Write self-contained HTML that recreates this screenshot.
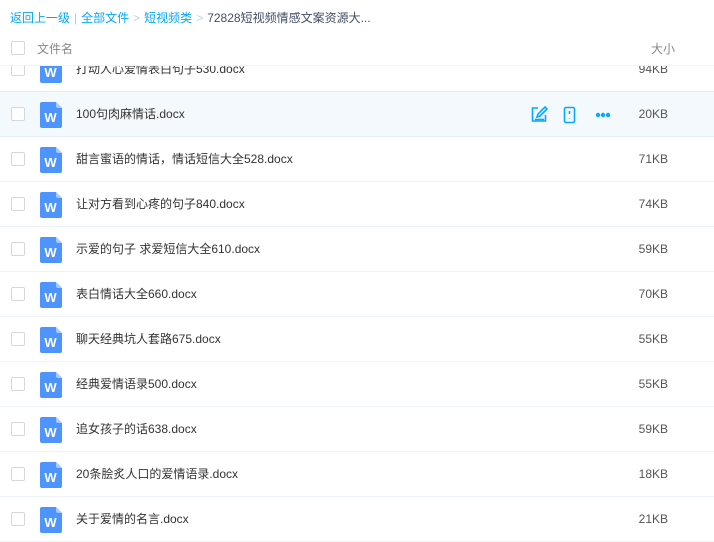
<!DOCTYPE html>
<html><head><meta charset="utf-8"><style>
*{margin:0;padding:0;box-sizing:border-box}
body{width:714px;height:537px;overflow:hidden;background:#fff;font-family:"Liberation Sans","Noto Sans CJK SC",sans-serif;font-size:12px;color:#424e67;position:relative}
.bc{position:absolute;left:10px;top:9px;font-size:12px;color:#06a7ff;white-space:nowrap}
.bc .g{color:#c5d0dc;margin:0 4px}
.bc .d{color:#424e67}
.hd{position:absolute;left:0;top:30px;width:714px;height:36px;background:#fff;border-bottom:1px solid #eef3f9;z-index:2}
.hd .t{position:absolute;left:37px;top:10px;color:#888}
.hd .s{position:absolute;left:651px;top:10px;color:#888}
.cb{position:absolute;left:11px;width:14px;height:14px;border:1px solid #d4d7de;border-radius:2px;background:#fff}
.row{position:absolute;left:0;width:714px;height:45px;border-bottom:1px solid #eef3f9}
.row.h{background:#f4f9fe;border-top:1px solid #e3eef9;border-bottom:1px solid #e3eef9}
.row .cb{top:15px}
.ic{position:absolute;left:40px;top:10px;width:22px;height:26px}
.nm{position:absolute;left:76px;top:0;line-height:44px;color:#333;white-space:nowrap}
.sz{position:absolute;right:46px;top:0;line-height:44px;color:#555}
.ops{position:absolute;left:530px;top:13px}
</style></head><body>
<div class="bc">返回上一级<span class="g" style="color:#b6c4d4">|</span>全部文件<span class="g">&gt;</span>短视频类<span class="g">&gt;</span><span class="d">72828短视频情感文案资源大...</span></div>
<div class="hd"><div class="cb" style="top:11px"></div><span class="t">文件名</span><span class="s">大小</span></div>
<svg width="0" height="0" style="position:absolute"><defs><symbol id="w" viewBox="0 0 22 26"><path d="M2 0H16L22 6V24a2 2 0 0 1-2 2H2a2 2 0 0 1-2-2V2a2 2 0 0 1 2-2z" fill="#4d94ff"/><path d="M16 0L22 6H18a2 2 0 0 1-2-2z" fill="#a8c9ff"/><text x="10.5" y="20" text-anchor="middle" font-family="Liberation Sans" font-weight="bold" font-size="13" fill="#fff">W</text></symbol></defs></svg>
<div class="row" style="top:47px"><div class="cb"></div><svg class="ic"><use href="#w"/></svg><span class="nm">打动人心爱情表白句子530.docx</span><span class="sz">94KB</span></div>
<div class="row h" style="top:91px;height:46px"><div class="cb"></div><svg class="ic"><use href="#w"/></svg><span class="nm">100句肉麻情话.docx</span>
<svg class="ops" width="90" height="20"><g fill="none" stroke="#06a7ff" stroke-width="1.6"><path d="M8 3H2.5v13h13V10"/><path d="M7 12l1-3 7-7 2 2-7 7z"/><path d="M5 14.5h9"/><rect x="34.5" y="2.5" width="10" height="15" rx="1.5"/><path d="M39.5 6v3M39.5 13.5v.5"/></g><g fill="#06a7ff"><circle cx="68" cy="10" r="2.2"/><circle cx="73" cy="10" r="2.2"/><circle cx="78" cy="10" r="2.2"/></g></svg>
<span class="sz">20KB</span></div>
<div class="row" style="top:137px"><div class="cb"></div><svg class="ic"><use href="#w"/></svg><span class="nm">甜言蜜语的情话，情话短信大全528.docx</span><span class="sz">71KB</span></div>
<div class="row" style="top:182px"><div class="cb"></div><svg class="ic"><use href="#w"/></svg><span class="nm">让对方看到心疼的句子840.docx</span><span class="sz">74KB</span></div>
<div class="row" style="top:227px"><div class="cb"></div><svg class="ic"><use href="#w"/></svg><span class="nm">示爱的句子 求爱短信大全610.docx</span><span class="sz">59KB</span></div>
<div class="row" style="top:272px"><div class="cb"></div><svg class="ic"><use href="#w"/></svg><span class="nm">表白情话大全660.docx</span><span class="sz">70KB</span></div>
<div class="row" style="top:317px"><div class="cb"></div><svg class="ic"><use href="#w"/></svg><span class="nm">聊天经典坑人套路675.docx</span><span class="sz">55KB</span></div>
<div class="row" style="top:362px"><div class="cb"></div><svg class="ic"><use href="#w"/></svg><span class="nm">经典爱情语录500.docx</span><span class="sz">55KB</span></div>
<div class="row" style="top:407px"><div class="cb"></div><svg class="ic"><use href="#w"/></svg><span class="nm">追女孩子的话638.docx</span><span class="sz">59KB</span></div>
<div class="row" style="top:452px"><div class="cb"></div><svg class="ic"><use href="#w"/></svg><span class="nm">20条脍炙人口的爱情语录.docx</span><span class="sz">18KB</span></div>
<div class="row" style="top:497px"><div class="cb"></div><svg class="ic"><use href="#w"/></svg><span class="nm">关于爱情的名言.docx</span><span class="sz">21KB</span></div>
</body></html>
